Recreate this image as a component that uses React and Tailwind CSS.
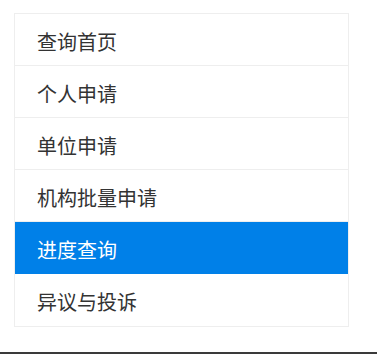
import React from 'react';

const items = ['查询首页', '个人申请', '单位申请', '机构批量申请', '进度查询', '异议与投诉'];

export default function App() {
    const active = 4;
    return (
        <div className="flex h-[354px] w-[377px] flex-col bg-white" style={{ fontFamily: '"Microsoft YaHei", "Noto Sans CJK SC", sans-serif' }}>
            {/* Side menu */}
            <ul className="ml-[14px] mt-[13px] w-[335px] border border-[#eeeeee] bg-white">
                {items.map((label, i) => (
                    <li
                        key={label}
                        className={
                            i === active
                                ? 'flex h-[52px] items-center bg-[#0080e8] pl-[22px] pt-[4px] text-[20px] text-white'
                                : 'flex h-[52px] items-center border-b border-[#eeeeee] pl-[22px] pt-[4px] text-[20px] text-[#333333] last:border-b-0'
                        }
                    >
                        {label}
                    </li>
                ))}
            </ul>
            <div className="mt-auto h-[2px] bg-[#3a3a3a]" />
        </div>
    );
}
